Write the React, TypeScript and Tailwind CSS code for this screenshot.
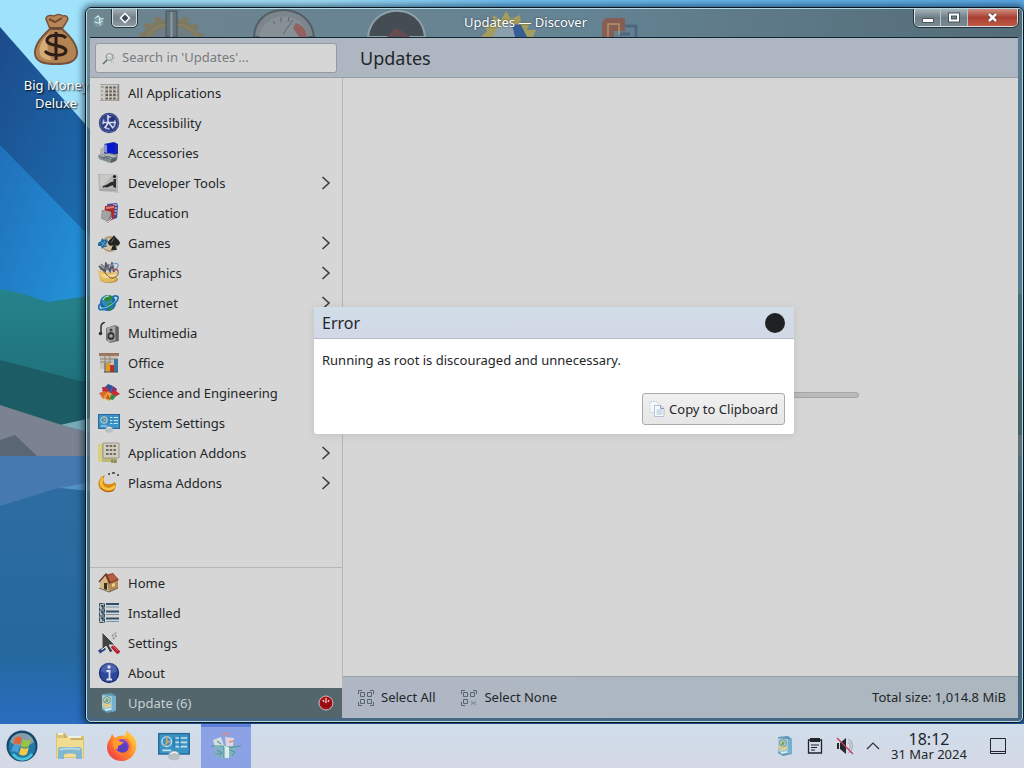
import { type ReactNode } from "react";

type IconProps = { children: ReactNode; size?: string; box?: string };

function Icon({ children, size = "h-[22px] w-[22px]", box = "0 0 22 22" }: IconProps) {
  return (
    <svg viewBox={box} className={`${size} shrink-0`} fill="none" aria-hidden>
      {children}
    </svg>
  );
}

const allAppsIcon = (
  <Icon>
    <path d="M2 2h19v17H2z" fill="#cbc9c5" />
    <path d="M2 2.500h19M2 18.500h19" stroke="#a5a29d" />
    <path d="M20.500 2v17" stroke="#8b8783" strokeWidth="1.500" />
    <path d="M3 5h3M3 9h2M3 13h2M3 17h2" stroke="#89847e" />
    <path d="M7.500 5.500h12M7.500 9.500h12M7.500 13h12M7.500 16.500h12" stroke="#5d5854" strokeWidth="1.800" strokeDasharray="2.500 1.300" />
    <path d="M7 7.500h13M7 11.300h13M7 15h13" stroke="#b5a895" strokeDasharray="3 1" />
  </Icon>
);

const accessibilityIcon = (
  <Icon>
    <circle cx="11" cy="11" r="10.200" fill="#2d3b80" />
    <circle cx="11" cy="11" r="9" stroke="#5864a0" strokeWidth="1" />
    <circle cx="11" cy="11" r="6" stroke="#aab2d6" strokeWidth="1.800" strokeDasharray="6 2.500" />
    <path d="M10 3v9M5 10.500h13M10 11l-3 5M11 11l4 5" stroke="#d5daed" strokeWidth="1.600" />
    <circle cx="14.500" cy="6.500" r="2.200" fill="#26347a" />
    <circle cx="7" cy="7" r="1.500" fill="#3c4a90" />
  </Icon>
);

const accessoriesIcon = (
  <Icon>
    <path d="M2 7l6-4v10l-6 2z" fill="#b2b3b2" />
    <path d="M6 2l10-2 4 2v10l-8 2-6-3z" fill="#1a26a0" />
    <path d="M9 2l8-1v9l-7 2z" fill="#0916d2" />
    <path d="M6 2l3 1v8l-3-1z" fill="#8791d6" />
    <path d="M0 13l11-2 9 2-1 5-7 3-11-4z" fill="#818b90" />
    <path d="M1 13l10-1 8 2-7 3z" fill="#b0b8ba" />
    <path d="M3 15l9 2M6 14l9 2M5 17l7-3" stroke="#667176" />
    <path d="M13 17l6-2-1 4-5 2z" fill="#54616b" />
  </Icon>
);

const developerIcon = (
  <Icon>
    <path d="M0 2h18l2 2v16l2 1-8-1-13-1z" fill="#b6b6b4" />
    <path d="M2 3l13-1-9 11-4 1z" fill="#c8c8c6" />
    <path d="M5 15l5-2 3-2 4-1M8 15l7-3 2 3" stroke="#252728" strokeWidth="1.800" />
    <circle cx="16.500" cy="4.500" r="1.500" fill="#181b1c" />
    <path d="M15.500 7h2.500v9l-2.500-1z" fill="#2c2e2f" />
    <path d="M2 18h16" stroke="#989897" />
  </Icon>
);

const educationIcon = (
  <Icon>
    <path d="M9 2l10-1 1 3-1 12-6 2z" fill="#3d4f9e" />
    <path d="M15 3l4 0M15 6l4 0M15 9l4 0M15 12l3 0" stroke="#a9b3d5" strokeWidth="1.500" />
    <path d="M7 4l10-1-1 13-4 3-6-5z" fill="#ac2b2d" />
    <path d="M8 5l8-1 0 2-8 1z" fill="#d9817d" />
    <path d="M4 8l9 2 1 6-4 5-7-4z" fill="#7f7f7f" />
    <path d="M5 8l8 2-3 9-7-3z" fill="#a3a3a2" />
    <path d="M3 17l7 3 4-4" stroke="#d4d4d4" />
  </Icon>
);

const gamesIcon = (
  <Icon>
    <circle cx="12" cy="12" r="8" fill="#b39b78" />
    <circle cx="11" cy="12" r="6" fill="#d2c1a4" />
    <path d="M0 11l3-2 1-3 2 2 3-1 1 3-2 2 1 3-3 0-2 2-1-3-3 0z" fill="#286a99" />
    <path d="M3 10l5 4M7 9l-3 5" stroke="#58a7cf" />
    <path d="M16 3c1 3 6 5 6 8a3 3 0 0 1-5 2l2 5h-6l2-5a3 3 0 0 1-5-2c0-3 5-5 6-8z" fill="#242424" />
    <path d="M16 6l-3 5" stroke="#656565" />
  </Icon>
);

const graphicsIcon = (
  <Icon>
    <ellipse cx="11" cy="17.500" rx="9" ry="3.500" fill="#b98c3a" />
    <path d="M0 8c5 3 13 3 19 2l-1 8c-4 3-12 3-16 0z" fill="#e0bb60" />
    <path d="M2 10c5 4 12 3 16 1v3c-6 3-12 3-15 0z" fill="#f1d792" />
    <path d="M1 4l6 5 1-7 4 7 2-7 2 8" stroke="#515a68" strokeWidth="2.200" />
    <path d="M3 2l6 6M11 2l-1 6" stroke="#7d6f7c" strokeWidth="1.500" />
    <path d="M13 4c3-4 8-3 7 0s-4 4-6 4" stroke="#7b9dbb" strokeWidth="1.300" />
    <path d="M2 7c5 1 7 9 12 9s7-4 6-7" stroke="#735a30" />
    <path d="M15 9c2-2 4-2 5 0" stroke="#b03e34" strokeWidth="1.500" />
  </Icon>
);

const internetIcon = (
  <Icon>
    <circle cx="10" cy="11" r="8" fill="#1662a5" />
    <circle cx="9" cy="9" r="5.500" fill="#3c99cb" opacity=".7" />
    <path d="M6 5l5-2 4 2-3 4-4 1-2-2zM10 11l6 0-1 5-4 3-2-4z" fill="#31883b" />
    <path d="M5 8c1-3 4-4 6-4" stroke="#d5eff8" />
    <path d="M1 17c7 3 20-7 19-12-1-2-4-1-6 0M2 12c-2 3-2 5 1 6" stroke="#1676b3" strokeWidth="1.800" />
    <path d="M2 16c8 1 16-6 17-10" stroke="#8ccae3" />
  </Icon>
);

const multimediaIcon = (
  <Icon>
    <path d="M7 0c-3 1-4 3-4 5v6" stroke="#323231" strokeWidth="1.500" />
    <circle cx="2.500" cy="11.500" r="1.800" fill="#323231" />
    <path d="M8 6l9-3 4 2v14l-9 2-4-3z" fill="#777775" />
    <path d="M9 6l8-2v14l-7 2z" fill="#a9aaa9" />
    <ellipse cx="13" cy="14" rx="3.500" ry="4" fill="#333536" />
    <circle cx="13" cy="14" r="1.800" fill="#a7aaab" />
    <circle cx="13" cy="8" r="1.600" fill="#404142" />
    <path d="M19 5v14" stroke="#4d5052" />
  </Icon>
);

const officeIcon = (
  <Icon>
    <path d="M1 1h20v3H1z" fill="#94705d" />
    <path d="M2 4h18v13H2z" fill="#c9c2b8" />
    <path d="M2 7h18M2 10h11M7 3v8M12 3v8" stroke="#8c8479" />
    <path d="M2 3h7M12 3h8" stroke="#b98266" />
    <path d="M8 11h4v9H8z" fill="#da9b2b" />
    <path d="M12 13h4v7h-4z" fill="#bf2f20" />
    <path d="M16 7h4v13h-4z" fill="#3c74a0" />
    <path d="M6 20h14M7 11v9" stroke="#514941" />
  </Icon>
);

const scienceIcon = (
  <Icon>
    <path d="M10 2l5 2-3 7-6-5z" fill="#2c549c" />
    <path d="M15 4l4 3-2 5-5-1z" fill="#7a3375" />
    <path d="M4 5h5l3 6-7 1z" fill="#b8303f" />
    <path d="M1 11l6-2 5 4-7 4z" fill="#da6b2d" />
    <path d="M13 11l4-3 5 4-7 4z" fill="#cb2e2c" />
    <path d="M10 9l5 6-4 4-6-3z" fill="#e9a22f" />
    <path d="M14 12l4 2-3 4-4-1z" fill="#358b4a" />
    <path d="M10 12l2 6-4-2z" fill="#d54a22" />
  </Icon>
);

const settingsScreen = (
  <>
    <path d="M0 2h22v15H0z" fill="#27699d" />
    <path d="M1 3h20v13H1z" fill="#3b93c4" />
    <circle cx="6" cy="8" r="3.300" stroke="#b7d9e8" />
    <path d="M6 4v4h3M4 11l3-3" stroke="#d8a468" strokeWidth="1" />
    <path d="M12 5.500h8M12 8.500h8M12 11.500h8M3 14h6" stroke="#bfe0ee" strokeWidth="1.200" />
    <path d="M11 5v7M15 4v8" stroke="#277bac" />
    <path d="M7 18.500c0-3 2-4 4-4s4 1 4 4-8 3-8 0z" fill="#b7bfc3" />
    <path d="M9 16.500c1-1.500 4-1.500 4 0" stroke="#eef1f2" />
  </>
);

const systemIcon = <Icon>{settingsScreen}</Icon>;

const addonsIcon = (
  <Icon>
    <path d="M0 2h18v18H0z" fill="#bdb878" />
    <path d="M0 2h4v18H0z" fill="#dad082" />
    <path d="M5 1h16v15H5z" fill="#d0cdc0" stroke="#9a9788" />
    <path d="M8 4h11M8 8h11M8 12h11" stroke="#6f6d60" strokeWidth="1.800" strokeDasharray="2.500 1.200" />
    <path d="M13 17h6v4h-6z" fill="#a6a269" />
    <path d="M14 18v2M17 18v3" stroke="#7a774c" />
  </Icon>
);

const plasmaIcon = (
  <Icon>
    <path d="M7 3c-2 4-2 9 2 9 4 1 6-1 8-2 3 5-1 11-8 10C2 19-1 14 1 9c1-3 3-5 6-6z" fill="#d68b15" />
    <path d="M5 6c-4 5-1 10 4 11 4 1 6-1 8-3" stroke="#f6c442" strokeWidth="2.500" />
    <path d="M3 16c3 4 8 5 13 2" stroke="#b05a13" />
    <path d="M10 2h2M14 1h3M19 3h2" stroke="#3d3c36" strokeWidth="1.400" />
  </Icon>
);

const homeIcon = (
  <Icon>
    <path d="M2 10l6-7 3 8v8l-9-3z" fill="#d3b884" />
    <path d="M9 10l11-3v9l-9 4z" fill="#b08a58" />
    <path d="M7 3l8-2 6 7-10 4z" fill="#94452c" />
    <path d="M9 4l6-2 4 5-7 3z" fill="#b46042" />
    <path d="M1 10l7-8 4 9" stroke="#663723" strokeWidth="1.400" />
    <path d="M6 11h3v7l-3-1z" fill="#352f26" />
    <path d="M14 12l3-1v3l-3 1z" fill="#efcf80" />
    <path d="M1 16l10 4 9-4" stroke="#6b6650" />
  </Icon>
);

const installedIcon = (
  <Icon>
    <path d="M1.500 1.500h5v19h-5z" fill="#b0bec5" stroke="#344f5e" strokeDasharray="4 1" />
    <path d="M8 2h13M8 9.500h13M8 16.500h13" stroke="#304f65" strokeWidth="1.800" />
    <path d="M8 5h13M8 12.500h13M8 19.500h13" stroke="#7493a4" />
    <path d="M3 4h2v3M3 10h2v3M3 16h2v3" stroke="#233746" strokeWidth="1.300" />
    <path d="M1 8h6M1 14h6" stroke="#344f5e" />
  </Icon>
);

const settingsIcon = (
  <Icon>
    <path d="M14 4l5-4M15 7l4-4" stroke="#8f969b" strokeWidth="1.800" strokeDasharray="2 1" />
    <path d="M1 20l6-4" stroke="#304481" strokeWidth="3.500" />
    <path d="M14 14l7 7" stroke="#b11f31" strokeWidth="4" />
    <path d="M15 14l5 5" stroke="#e46b70" />
    <path d="M4 0v18l4-4 4 7 3-2-4-6h6z" fill="#424344" stroke="#d8d8d8" />
  </Icon>
);

const aboutIcon = (
  <Icon>
    <circle cx="11" cy="11" r="10.200" fill="#223079" />
    <circle cx="11" cy="11" r="8.800" fill="#2e469c" />
    <path d="M3 9a8 8 0 0 1 16 0c-4 3-12 3-16 0z" fill="#687dbf" opacity=".5" />
    <circle cx="11" cy="5" r="1.700" fill="#dfe2ec" />
    <path d="M8.500 9h3v8M8.500 17.500h5.500" stroke="#dfe2ec" strokeWidth="1.800" />
  </Icon>
);

const boxShape = (
  <>
    <path d="M4 2l10-1 4 3v15l-9 2-5-3z" fill="#5f96b2" />
    <path d="M4 3l10 1v14l-6 1-4-3z" fill="#a3c9d8" />
    <path d="M14 4l4 0v14l-4 2z" fill="#74b0cf" />
    <circle cx="9" cy="8" r="3.300" fill="#dae7df" stroke="#668b91" />
    <path d="M8 6l3 1-1 3-3 0z" fill="#76a65b" />
    <path d="M4 12l9 1M6 15l6-1" stroke="#e9cd79" strokeWidth="1.500" />
    <path d="M7 18l6-1" stroke="#d9edf4" strokeWidth="1.500" />
  </>
);

const updateIcon = <Icon>{boxShape}</Icon>;

type Entry = { label: string; icon: ReactNode; more?: boolean };

const categories: Entry[] = [
  { label: "All Applications", icon: allAppsIcon },
  { label: "Accessibility", icon: accessibilityIcon },
  { label: "Accessories", icon: accessoriesIcon },
  { label: "Developer Tools", icon: developerIcon, more: true },
  { label: "Education", icon: educationIcon },
  { label: "Games", icon: gamesIcon, more: true },
  { label: "Graphics", icon: graphicsIcon, more: true },
  { label: "Internet", icon: internetIcon, more: true },
  { label: "Multimedia", icon: multimediaIcon },
  { label: "Office", icon: officeIcon },
  { label: "Science and Engineering", icon: scienceIcon },
  { label: "System Settings", icon: systemIcon },
  { label: "Application Addons", icon: addonsIcon, more: true },
  { label: "Plasma Addons", icon: plasmaIcon, more: true },
];

const pages: Entry[] = [
  { label: "Home", icon: homeIcon },
  { label: "Installed", icon: installedIcon },
  { label: "Settings", icon: settingsIcon },
  { label: "About", icon: aboutIcon },
];

function NavItem({ label, icon, more }: Entry) {
  return (
    <li>
      <button type="button" className="flex h-[30px] w-full items-center gap-2 px-2 text-left hover:bg-black/5">
        {icon}
        <span className="flex-1 pt-[2px]">{label}</span>
        {more ? (
          <Icon size="h-4 w-4" box="0 0 16 16">
            <path d="M4.500 2l6.500 6-6.500 6" stroke="#3c3e40" strokeWidth="1.600" />
          </Icon>
        ) : null}
      </button>
    </li>
  );
}

function Wallpaper() {
  return (
    <svg
      viewBox="0 0 1024 724"
      preserveAspectRatio="xMinYMin slice"
      className="absolute inset-0 h-full w-full"
      aria-hidden
    >
      <defs>
        <linearGradient id="sky">
          <stop offset="0" stopColor="#9fe2fb" />
          <stop offset=".3" stopColor="#a4e2fb" />
          <stop offset=".5" stopColor="#71c0f2" />
          <stop offset="1" stopColor="#5ba9e4" />
        </linearGradient>
        <linearGradient id="deep" x2="1" y2="1">
          <stop stopColor="#1c4b8b" />
          <stop offset="1" stopColor="#1c72b5" />
        </linearGradient>
        <linearGradient id="bright" x2="1" y2=".6">
          <stop stopColor="#2070ba" />
          <stop offset="1" stopColor="#2393d8" />
        </linearGradient>
        <linearGradient id="hill" x2="0" y2="1">
          <stop stopColor="#25838c" />
          <stop offset="1" stopColor="#1c6973" />
        </linearGradient>
        <linearGradient id="lake" x2="0" y2="1">
          <stop stopColor="#2d6ca0" />
          <stop offset=".7" stopColor="#25699f" />
          <stop offset="1" stopColor="#2a6dc0" />
        </linearGradient>
      </defs>
      <path d="M0 0h1024v724H0z" fill="url(#sky)" />
      <path d="M0 27l100 114v110H0z" fill="url(#deep)" />
      <path d="M0 145l100 102v70H0z" fill="url(#bright)" />
      <path d="M0 289l20 4 28 9 52-8h924v140H0z" fill="url(#hill)" />
      <path d="M0 360l80 21 20 0h924v90H0z" fill="#1c5c64" />
      <path d="M60 425l40-9v20H76z" fill="#78abb8" />
      <path d="M0 405l62 20 38 10h924v25H0z" fill="#7b8291" />
      <path d="M0 440l15-5 23 22H0z" fill="#5b6675" />
      <path d="M0 456h1024v60H0z" fill="#4579b0" />
      <path d="M60 488l40-8v12z" fill="#5293c8" />
      <path d="M0 506l58-18 42 4h924v232H0z" fill="url(#lake)" />
    </svg>
  );
}

function DesktopShortcut() {
  return (
    <a
      href="#big-money"
      className="absolute top-3 left-3 flex w-[88px] flex-col items-center gap-2 text-center leading-[18px] text-white [text-shadow:1px_1px_2px_#000]"
    >
      <svg viewBox="0 0 48 56" className="h-14 w-12" aria-hidden>
        <path d="M18 17C9 25 2 33 3 42c1 8 9 10 21 10s20-2 21-10c1-9-6-17-15-25z" fill="#b38354" stroke="#76533d" strokeWidth="2" />
        <path d="M17 21C9 29 6 36 8 42c1 4 6 6 12 6-6-8-5-19-3-27z" fill="#d5ab78" />
        <path d="M18 17l-4-10c0-4 5-4 8-3 3-2 6-2 9 0 4-1 6 2 4 5l-5 8z" fill="#b88656" stroke="#76533d" strokeWidth="1.500" />
        <path d="M17 7l6 3 7-4M18 16h12" stroke="#6d4a34" strokeWidth="2" fill="none" />
        <path
          d="M34 26c-3-4-18-4-19 2-1 7 19 4 19 11-1 6-17 5-21 0M24 20v28"
          stroke="#2e1c16"
          strokeWidth="3"
          fill="none"
        />
      </svg>
      <span>Big Money Deluxe</span>
    </a>
  );
}

// Blurred desktop shortcuts seen through the glass title bar
function GlassBackdrop() {
  return (
    <svg
      viewBox="0 0 936 28"
      preserveAspectRatio="xMinYMin slice"
      className="absolute inset-0 h-full w-full"
      aria-hidden
    >
      <g opacity=".75">
        <path
          d="M53 28l-1-4 5-1 2-4-3-3 5-2 4 1 3-3-1-4 6 0 2 3 6-1 9 0 4 1 3-3 5 1-1 4 3 3 5-1 3 3-3 3 3 3 5 1-1 3z"
          fill="#857654"
        />
        <path d="M65 28c6-14 34-14 42 0z" fill="#6f7d80" />
        <path d="M61 27c8-16 41-16 49 0" stroke="#a08a58" fill="none" />
        <path d="M79 2h11v26H79z" fill="#5e6c74" stroke="#39454d" />
        <path d="M84.500 3v25" stroke="#9aa5a8" strokeWidth="2" />
        <path d="M167 28C168-8 224-8 227 28z" fill="#85868b" stroke="#4b5258" strokeWidth="2" />
        <path d="M172 28c4-27 44-28 49 0z" fill="#909499" />
        <path d="M209 14c6 2 10 6 11 14h-8l-6-9z" fill="#a1564f" />
        <path d="M196 25l10-14M194 8v5M202 8l-1 5M186 12l2 3" stroke="#565e64" />
        <path d="M281 28c3-34 54-36 57 0z" fill="#393a3f" stroke="#9caaaf" strokeWidth="2" />
        <path d="M300 28l8-9 7 3 8 6z" fill="#653a3e" />
        <path d="M394 28l6-6-3-6 9-1 0-9 8 5 5-9 5 8 9-4 1 8 9-1-3 8 9 0-3 7z" fill="#b8a44d" />
        <path d="M406 28c4-15 18-19 29-6l-6 6z" fill="#97a9b5" />
        <path d="M425 15l9 1 6 12h-12z" fill="#275294" />
        <path d="M515 28V13l4-4h19v13h-11v6z" fill="#94513f" />
        <path d="M521 28V15h11v11" stroke="#c79b60" strokeWidth="1.500" fill="none" />
        <path d="M538 17h11v11M533 25h10" stroke="#475f79" strokeWidth="3" fill="none" />
      </g>
    </svg>
  );
}

function TitleBar() {
  return (
    <header className="relative flex h-7 items-start bg-linear-to-r from-[#6d858e] via-[#668595] to-[#536b77] text-white">
      <GlassBackdrop />
      <div className="relative flex gap-[7px] pl-[6px]">
        <div className="pt-1">
          <Icon size="h-4 w-3" box="0 0 16 20">
            <path d="M1 5l8-1 5 3v8l-8 3-5-4z" fill="#779aa2" />
            <path d="M3 6l4-3 3 5 4-2M2 11l5 2 6-3M8 7l2 9" stroke="#d6e7e8" strokeWidth="1.500" />
          </Icon>
        </div>
        <button
          type="button"
          aria-label="Window menu"
          className="flex h-[18px] w-[25px] items-center justify-center rounded-b-[4px] border border-t-0 border-[#d4dee2] bg-linear-to-b from-[#a4afb6] via-[#74828c] via-50% to-[#8b9aa2] outline outline-[#28343c]"
        >
          <Icon size="h-3 w-3" box="0 0 12 12">
            <path d="M6 1.500L10.500 6 6 10.500 1.500 6z" fill="#3b4854" stroke="#fff" strokeWidth="1.500" />
          </Icon>
        </button>
      </div>
      <h1 className="relative flex-1 text-center leading-[26px] [text-shadow:0_0_2px_#23313a]">Updates — Discover</h1>
      <div className="relative mr-1 flex h-[18px] overflow-hidden rounded-b-[5px] border border-t-0 border-[#d8e0e4] outline outline-[#26323a]">
        <button
          type="button"
          aria-label="Minimize"
          className="flex w-[26px] items-center justify-center border-r border-[#b8c3c9] bg-linear-to-b from-[#a8b4ba] via-[#6e7e87] via-50% to-[#798991]"
        >
          <Icon size="h-3 w-3" box="0 0 12 12">
            <path d="M.5 6.500h11v4H.5z" fill="#fff" stroke="#4a555c" />
          </Icon>
        </button>
        <button
          type="button"
          aria-label="Maximize"
          className="flex w-[27px] items-center justify-center border-r border-[#b8c3c9] bg-linear-to-b from-[#a8b4ba] via-[#6e7e87] via-50% to-[#798991]"
        >
          <Icon size="h-3 w-3" box="0 0 12 12">
            <path d="M2 2.500h8v6H2z" stroke="#47535b" strokeWidth="4" />
            <path d="M2 2.500h8v6H2z" stroke="#fff" strokeWidth="2" />
          </Icon>
        </button>
        <button
          type="button"
          aria-label="Close"
          className="flex w-[49px] items-center justify-center bg-linear-to-b from-[#cf8e82] via-[#a83f32] via-50% to-[#c15a45]"
        >
          <Icon size="h-3 w-3" box="0 0 12 12">
            <path d="M2 2l7 7M9 2l-7 7" stroke="#5d3836" strokeWidth="4" />
            <path d="M2 2l7 7M9 2l-7 7" stroke="#fff" strokeWidth="2.500" />
          </Icon>
        </button>
      </div>
    </header>
  );
}

function Sidebar() {
  return (
    <nav className="flex w-[253px] shrink-0 flex-col border-r border-[#b4b6b8] bg-[#d6d6d6]">
      <ul>
        {categories.map((item) => (
          <NavItem key={item.label} {...item} />
        ))}
      </ul>
      <ul className="mt-auto border-t border-[#b4b6b8]">
        {pages.map((item) => (
          <NavItem key={item.label} {...item} />
        ))}
      </ul>
      <button type="button" className="flex h-[30px] items-center gap-2 bg-[#52666c] px-2 text-left text-[#c8d0d3]">
        {updateIcon}
        <span className="flex-1 pt-[2px]">Update (6)</span>
        <Icon size="h-4 w-4" box="0 0 16 16">
          <circle cx="8" cy="8" r="7" fill="#a80f17" stroke="#c9bfc0" />
          <path d="M8 3v5M5 5l1 2M11 5l-1 2" stroke="#ecd0d2" strokeWidth="1.300" />
          <path d="M4 7c0 6 8 6 8 0" stroke="#650b10" />
        </Icon>
      </button>
    </nav>
  );
}

function SelectGlyph({ none = false }: { none?: boolean }) {
  return (
    <Icon size="h-4 w-4" box="0 0 16 16">
      <path d="M.5 4V.5H4M12 .5h3.500V4M.5 12v3.500H4" stroke="#59646d" />
      <path d="M2.500 2.500h4v4h-4zM9.500 2.500h4v4h-4zM2.500 9.500h4v4h-4z" stroke="#59646d" />
      {none ? (
        <path d="M10 11l5 4M15 11l-5 4M10 13h5" stroke="#838d97" />
      ) : (
        <path d="M9.500 9.500h4v4h-4zM12 15.500h3.500V12" stroke="#59646d" />
      )}
    </Icon>
  );
}

function ErrorDialog() {
  return (
    <div className="absolute inset-0 flex items-center justify-center pb-[15px]">
      <section
        role="dialog"
        aria-labelledby="error-title"
        className="w-[480px] overflow-hidden rounded-[3px] bg-white shadow-[0_1px_8px_rgba(0,0,0,0.1)]"
      >
        <div className="flex h-8 items-center justify-between border-b border-[#b4bac6] bg-linear-to-b from-[#d1dde9] to-[#d3d8e6] px-2">
          <h2 id="error-title" className="text-base">
            Error
          </h2>
          <button type="button" aria-label="Close dialog" className="mr-px h-5 w-5 rounded-full bg-[#202122]" />
        </div>
        <p className="px-2 pt-[11px] leading-5">Running as root is discouraged and unnecessary.</p>
        <div className="flex justify-end px-[9px] pt-[23px] pb-[9px]">
          <button
            type="button"
            className="flex h-8 items-center gap-1 rounded-[3px] border border-[#a9aaac] bg-linear-to-b from-[#f0f0f0] to-[#e6e6e6] px-[6px]"
          >
            <Icon size="h-4 w-4" box="0 0 16 16">
              <path d="M1 .5h6l3 3v8H1z" fill="#f5f8fb" stroke="#c4cedb" strokeDasharray="2 1" />
              <path d="M5.500 4.500h6l3.500 3v8H5.500z" fill="#f6f9fd" stroke="#b3c1d4" />
              <path d="M11.500 4.500v3H15" stroke="#849bbc" />
              <path d="M7.500 9h6M7.500 11h6M7.500 13h6" stroke="#aebfd4" />
            </Icon>
            <span className="pt-px">Copy to Clipboard</span>
          </button>
        </div>
      </section>
    </div>
  );
}

function DiscoverWindow() {
  return (
    <main className="absolute top-[7px] right-0 bottom-px left-[85px] flex flex-col rounded-[6px] border border-[#071722] bg-[#52666c]/70 shadow-[0_0_7px_2px_rgba(0,20,40,0.6)]">
      <div className="flex min-h-0 flex-1 flex-col overflow-hidden rounded-[5px] border border-[#b2d9e3]">
        <TitleBar />
        <div className="relative mr-1 mb-[3px] ml-[3px] flex min-h-0 flex-1 flex-col border-t border-[#102733] bg-[#d6d6d6] text-[#232629]">
          <div className="flex h-10 items-center border-b border-[#969ea8] bg-[#aeb6c1]">
            <label className="ml-[5px] flex h-[30px] w-[242px] items-center gap-1 rounded-[3px] border border-[#929aa3] bg-[#d6d6d6] px-[6px]">
              <Icon size="h-4 w-4" box="0 0 16 16">
                <circle cx="7.500" cy="7" r="3.500" fill="#cbd0d2" stroke="#8d9395" />
                <path d="M5 10l-4 4" stroke="#5f6466" strokeWidth="1.500" />
                <path d="M11 5h2M12 8h2M9 12h4" stroke="#9aa0a2" strokeDasharray="1 1" />
                <path d="M6 6l2-1" stroke="#f2f4f5" />
              </Icon>
              <input
                type="search"
                aria-label="Search in Updates"
                placeholder="Search in 'Updates'..."
                className="min-w-0 flex-1 bg-transparent pt-px outline-none placeholder:text-[#777b7e]"
              />
            </label>
            <h2 className="ml-[23px] text-lg">Updates</h2>
          </div>
          <div className="flex min-h-0 flex-1">
            <Sidebar />
            <div className="flex min-w-0 flex-1 flex-col">
              <div className="flex flex-1 items-center justify-center pt-[36px]">
                <div
                  role="progressbar"
                  aria-label="Fetching updates"
                  className="h-[6px] w-[53%] rounded-full border border-[#a6a6a6] bg-[#bababa]"
                />
              </div>
              <footer className="flex h-[42px] items-center gap-[26px] border-t border-[#969ea8] bg-linear-to-r from-[#aeb7c3] to-[#adb7bf] pr-3 pl-[15px]">
                <button type="button" className="flex items-center gap-[7px]">
                  <SelectGlyph />
                  Select All
                </button>
                <button type="button" className="flex items-center gap-[7px]">
                  <SelectGlyph none />
                  Select None
                </button>
                <span className="ml-auto">Total size: 1,014.8 MiB</span>
              </footer>
            </div>
          </div>
          <ErrorDialog />
        </div>
      </div>
    </main>
  );
}

function TaskButton({ label, active, children }: { label: string; active?: boolean; children: ReactNode }) {
  return (
    <button
      type="button"
      aria-label={label}
      className={`flex w-[50px] items-center justify-center border-t-[3px] pb-[3px] ${
        active ? "border-[#607fd9] bg-[#8ba3e5]" : "border-transparent"
      }`}
    >
      {children}
    </button>
  );
}

function Taskbar() {
  return (
    <footer className="flex h-11 shrink-0 bg-linear-to-b from-[#d0ddeb] to-[#d4d9e5] text-[#232629]">
      <div className="flex gap-[2px]">
        <button type="button" aria-label="Start" className="flex w-[43px] items-center justify-center">
          <Icon size="h-8 w-8" box="0 0 32 32">
            <circle cx="16" cy="16" r="15.500" fill="#174668" />
            <circle cx="16" cy="17" r="13.500" fill="#217aa5" />
            <path d="M4 12C7 0 25 0 28 12c-8 6-16 6-24 0z" fill="#839da9" />
            <path d="M7 24c5 7 14 7 19 0" stroke="#49c2dc" strokeWidth="3" />
            <path d="M9 8c2-2 4-2 7 0l-2 7c-2-2-5-2-7 0z" fill="#e16435" />
            <path d="M17 9c3 2 5 2 8 0l-2 7c-3 2-5 2-8 0z" fill="#9bc445" />
            <path d="M7 16c2-2 4-2 7 0l-2 7c-3-2-5-2-7-1z" fill="#4b9ed8" />
            <path d="M15 17c3 2 5 2 8 0l-2 7c-3 2-5 2-8 0z" fill="#f2ca4a" />
          </Icon>
        </button>
        <TaskButton label="Files">
          <Icon size="h-7 w-7" box="0 0 28 28">
            <path d="M0 3V1h9l1 3h18v22H0z" fill="#dbc476" />
            <path d="M2 2h5M12 5h13" stroke="#eff3e7" strokeWidth="2" />
            <path d="M1 6h12l2 2h12v17H1z" fill="#f1dd92" />
            <path d="M15 7h12M9 2v4" stroke="#bb9b49" />
            <path d="M2 27V18c0-3 2-3 4-3h16c3 0 4 1 4 4v8h-6v-4c0-2-12-2-12 0v4z" fill="#83b6cf" />
            <path d="M4 18c2-2 18-2 20 0" stroke="#b5dbe5" strokeWidth="2" />
          </Icon>
        </TaskButton>
        <TaskButton label="Firefox">
          <Icon size="h-8 w-8" box="0 0 32 32">
            <defs>
              <linearGradient id="fox" x1="1" x2="0" y2="1">
                <stop stopColor="#ffe64a" />
                <stop offset=".5" stopColor="#ff8b29" />
                <stop offset="1" stopColor="#ee2852" />
              </linearGradient>
            </defs>
            <path
              d="M4 9l2-5 3 4c3-2 6-3 10-2l2-6c1 4 8 5 9 12 2 10-5 19-14 19S1 25 1 17c0-3 1-6 3-8z"
              fill="url(#fox)"
            />
            <circle cx="16" cy="16" r="7" fill="#8a43d0" />
            <path d="M7 10c3-1 6 0 8 2h4c-1 3-4 3-5 5l-5 3c-2-3-3-6-2-10z" fill="#ff9a2c" />
            <path d="M12 16c3-1 4-2 6-4 4 2 5 6 3 9-3 3-8 2-9-1z" fill="#5b3fc0" />
            <path d="M19 9c5 2 7 9 3 13-4 3-9 2-12-1" stroke="#ff7a30" strokeWidth="2" />
          </Icon>
        </TaskButton>
        <TaskButton label="System Settings">
          <Icon size="h-8 w-8">{settingsScreen}</Icon>
        </TaskButton>
        <TaskButton label="Discover" active>
          <Icon size="h-8 w-8" box="0 0 32 32">
            <path d="M4 16l7-2 16 2-2 10-11 3-9-3z" fill="#7fb4bd" opacity=".8" />
            <path d="M3 10l8-3 3 9-9 1z" fill="#d3e0dc" />
            <path d="M15 7l9 1-1 8-7 0z" fill="#e0d5de" />
            <path d="M1 16h12l4 2 14-2M7 20l5 3-3 3M20 20l5 2-3 4" stroke="#4d9596" />
            <path d="M12 5l4-2 3 3M19 12l5-1" stroke="#d98a84" strokeWidth="1.500" />
            <path d="M7 11l4 3M5 24l6-1" stroke="#6f9fae" strokeWidth="1.500" />
            <path d="M14 16l5 1v11l-5 0z" fill="#dcece9" />
            <path d="M14 17v11" stroke="#4d9596" />
          </Icon>
        </TaskButton>
      </div>
      <div className="ml-auto flex items-stretch">
        <button type="button" aria-label="Software updates" className="flex w-[30px] items-center justify-center">
          <Icon>{boxShape}</Icon>
        </button>
        <button type="button" aria-label="Clipboard" className="flex w-[30px] items-center justify-center">
          <Icon size="h-4 w-4" box="0 0 16 16">
            <path d="M1.500 2h13v13h-13z" stroke="#202428" strokeWidth="1.300" />
            <path d="M3 0h10v4H3z" fill="#202428" />
            <path d="M4 7h8M4 9.500h6M4 12h4" stroke="#202428" />
          </Icon>
        </button>
        <button type="button" aria-label="Volume muted" className="flex w-[30px] items-center justify-center">
          <Icon size="h-[18px] w-[18px]" box="0 0 18 18">
            <path d="M1 6h2v6H1zM4 6l6-5v16l-6-5z" fill="#24282c" />
            <path d="M12 5c3 2 3 6 0 8M12 2c6 3 6 11 0 14" stroke="#a9b0ba" strokeWidth="1.300" />
            <path d="M1 1l16 16" stroke="#c7375a" strokeWidth="1.300" />
          </Icon>
        </button>
        <button type="button" aria-label="Show hidden icons" className="flex w-[26px] items-center justify-center">
          <Icon size="h-4 w-4" box="0 0 16 16">
            <path d="M2 11l6-6 6 6" stroke="#2b3035" strokeWidth="1.200" />
          </Icon>
        </button>
        <button type="button" className="flex w-[86px] flex-col items-center justify-center pt-px">
          <span className="text-base leading-[15px]">18:12</span>
          <span className="leading-[15px]">31 Mar 2024</span>
        </button>
        <button type="button" aria-label="Show desktop" className="flex w-[52px] items-center justify-center">
          <Icon size="h-4 w-4" box="0 0 16 16">
            <path d="M.5.5h15v15H.5zM1 13.500h14" stroke="#202428" />
          </Icon>
        </button>
      </div>
    </footer>
  );
}

export default function App() {
  return (
    <div className="flex h-screen flex-col overflow-hidden font-['Noto_Sans',sans-serif] text-[13px]">
      <div className="relative min-h-0 flex-1 overflow-hidden">
        <Wallpaper />
        <DesktopShortcut />
        <DiscoverWindow />
      </div>
      <Taskbar />
    </div>
  );
}
